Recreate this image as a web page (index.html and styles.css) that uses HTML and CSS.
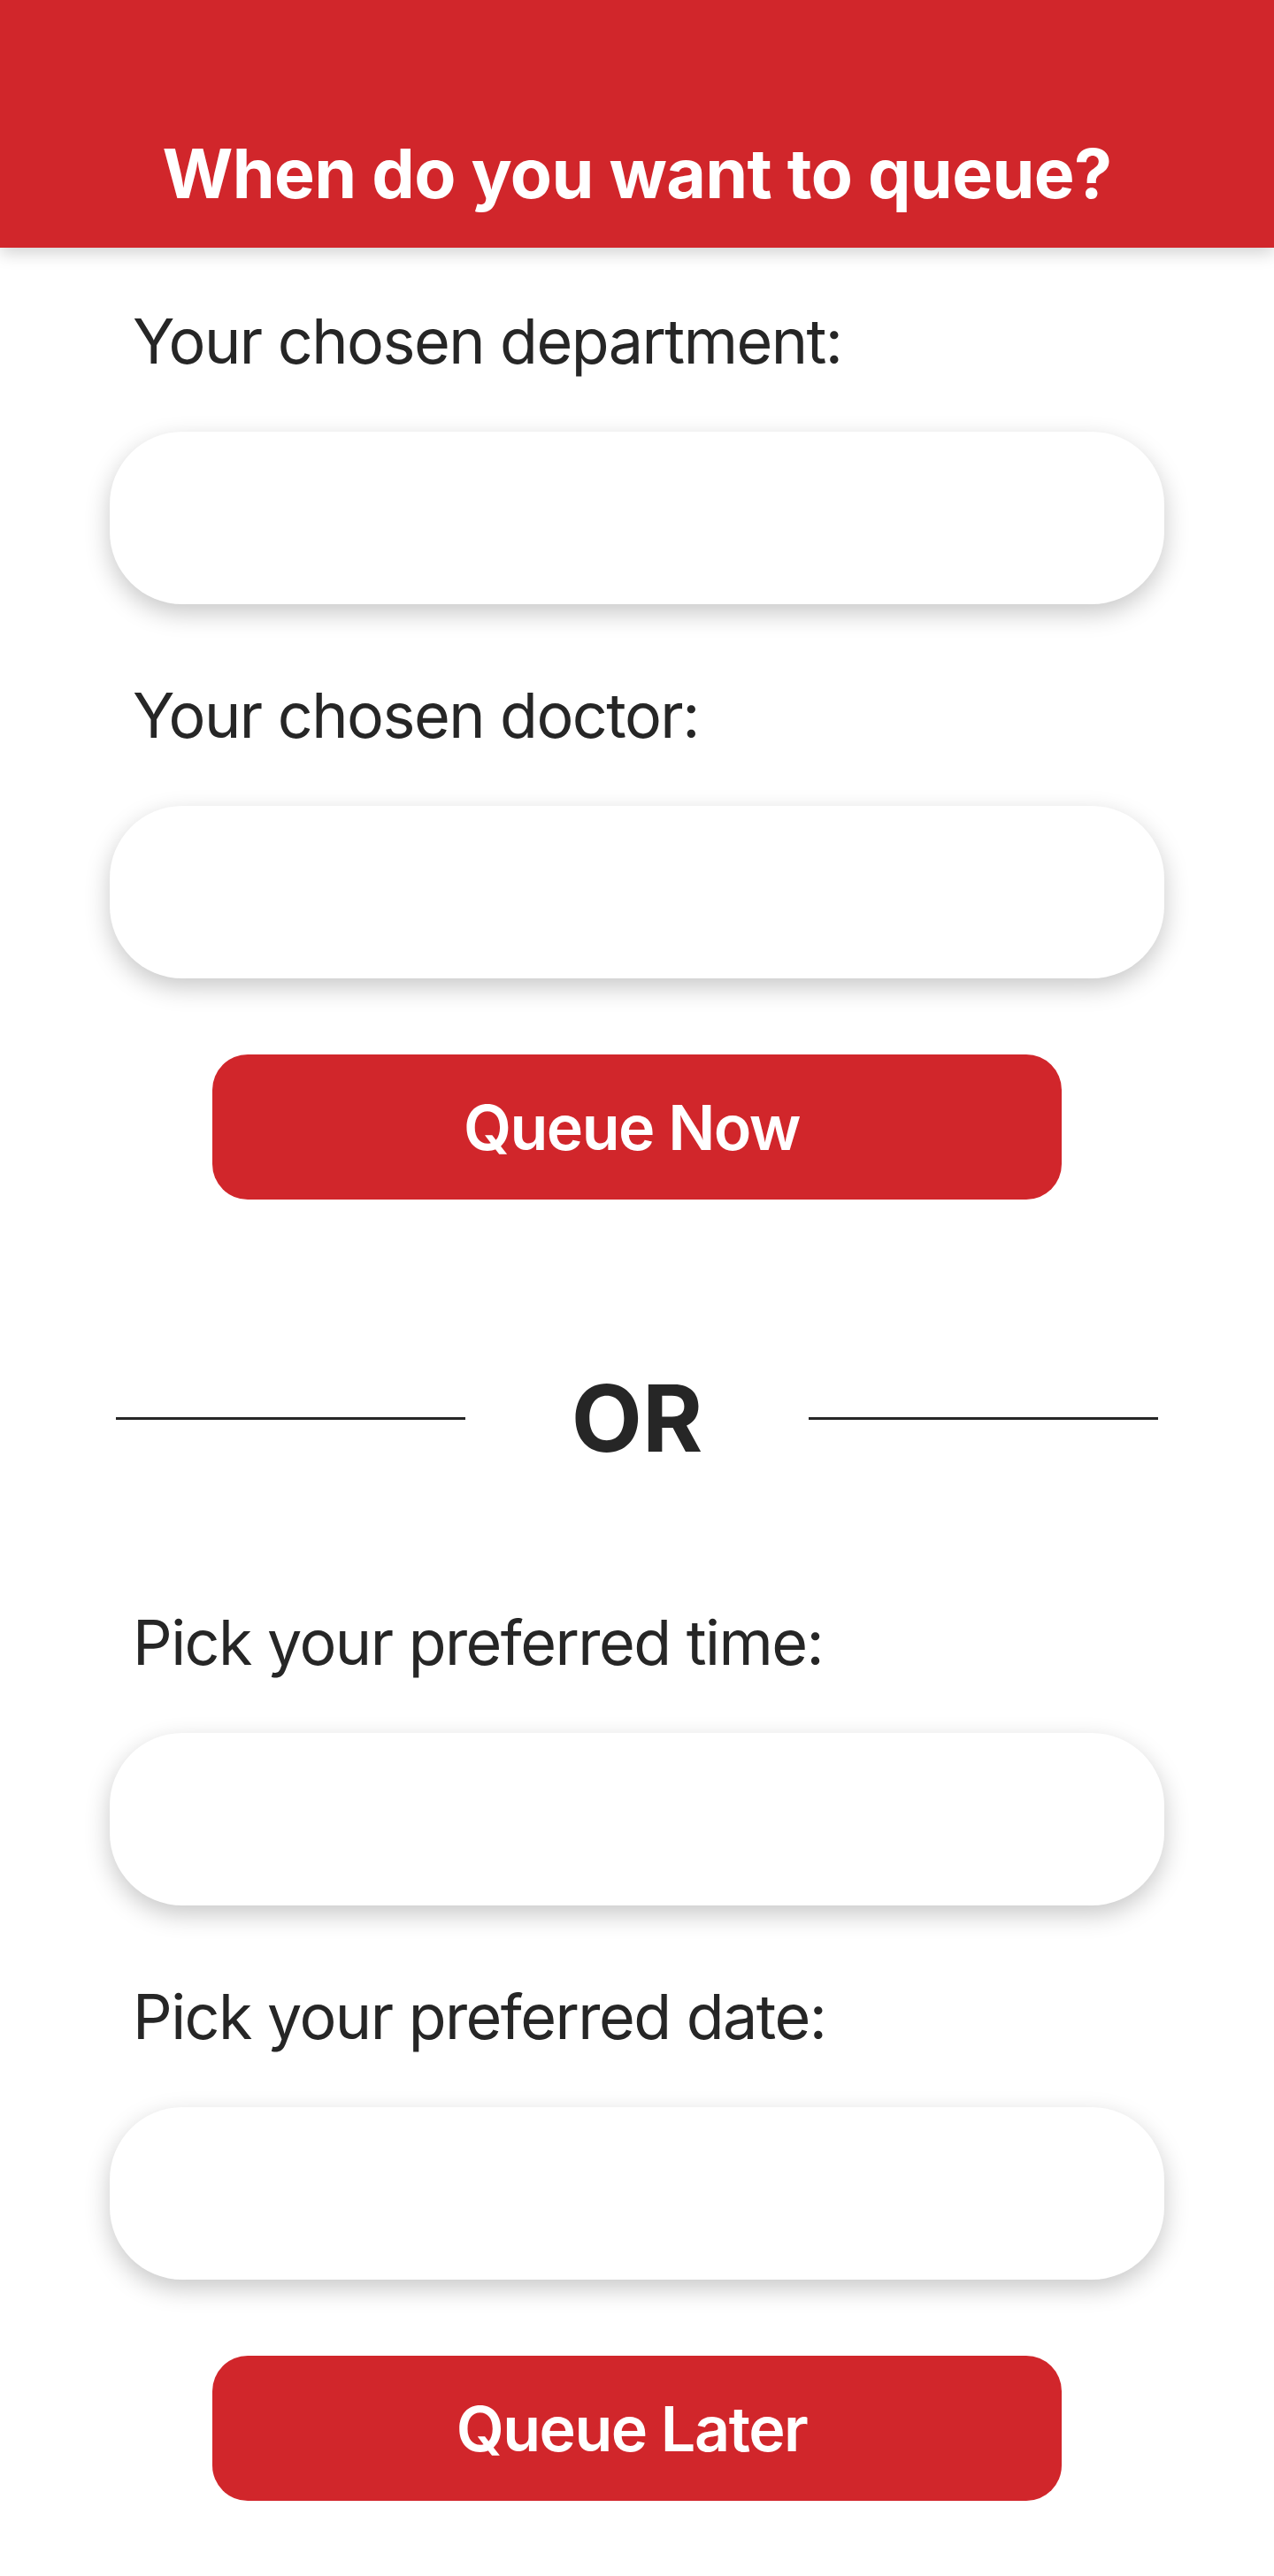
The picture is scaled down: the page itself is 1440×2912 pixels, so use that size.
FILE: index.html
```html
<!DOCTYPE html>
<html lang="en">
<head>
<meta charset="utf-8">
<title>When do you want to queue?</title>
<link rel="stylesheet" href="styles.css">
</head>
<body>
<header class="top">
  <h1 class="title">When do you want to queue?</h1>
</header>
<main class="form">
  <label class="label first">Your chosen department:</label>
  <input class="field" type="text">
  <label class="label">Your chosen doctor:</label>
  <input class="field" type="text">
  <button class="btn" type="button">Queue Now</button>

  <div class="divider">
    <span class="line"></span>
    <span class="or">OR</span>
    <span class="line"></span>
  </div>

  <label class="label after-or">Pick your preferred time:</label>
  <input class="field" type="text">
  <label class="label">Pick your preferred date:</label>
  <input class="field" type="text">
  <button class="btn" type="button">Queue Later</button>
</main>
</body>
</html>
```
FILE: styles.css
```css
* { box-sizing: border-box; }
html, body {
  margin: 0;
  padding: 0;
  background: #ffffff;
  font-family: Inter, "Noto Sans", "Liberation Sans", sans-serif;
  color: #262626;
}
.top {
  height: 280px;
  background: #d1262b;
  box-shadow: 0 6px 18px rgba(0, 0, 0, 0.18);
  display: flex;
  align-items: flex-end;
  justify-content: center;
  padding-bottom: 45px;
  position: relative;
}
.title {
  margin: 0;
  color: #ffffff;
  font-size: 77px;
  font-weight: 700;
  line-height: 1;
  letter-spacing: -0.6px;
}
.form {
  display: flex;
  flex-direction: column;
  padding: 0 124px 84px;
}
.label {
  display: block;
  margin: 91px 0 0 26px;
  font-size: 70px;
  line-height: 70px;
  font-weight: 400;
  letter-spacing: -1.55px;
  color: #262626;
}
.label.first { margin-top: 71px; }
.label.after-or { margin-top: 154px; }
.field {
  display: block;
  width: 100%;
  height: 195px;
  margin-top: 67px;
  border: none;
  outline: none;
  background: #ffffff;
  border-radius: 82px;
  box-shadow: 0 10px 28px rgba(0, 0, 0, 0.22);
  font: inherit;
}
.btn {
  align-self: center;
  width: 960px;
  height: 164px;
  margin-top: 86px;
  padding: 0 12px 0 0;
  border: none;
  border-radius: 40px;
  background: #d1262b;
  color: #ffffff;
  font-family: inherit;
  font-size: 70px;
  font-weight: 600;
  letter-spacing: -1.5px;
  cursor: pointer;
}
.divider {
  display: flex;
  align-items: center;
  justify-content: center;
  height: 130px;
  margin-top: 182px;
  gap: 120px;
}
.line {
  width: 395px;
  height: 3px;
  background: #262626;
}
.or {
  font-size: 104px;
  font-weight: 700;
  line-height: 1;
  color: #262626;
}
```
